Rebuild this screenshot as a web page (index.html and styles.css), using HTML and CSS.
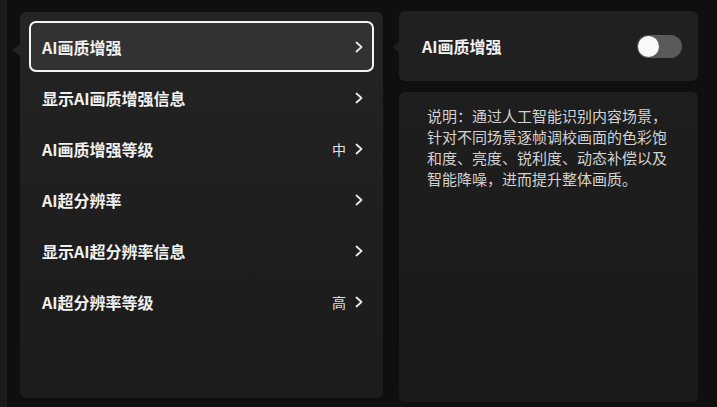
FILE: index.html
```html
<!DOCTYPE html>
<html lang="zh-CN">
<head>
<meta charset="utf-8">
<title>AI画质增强</title>
<link rel="stylesheet" href="styles.css">
</head>
<body>
<div class="screen">
  <div class="edge"></div>
  <div class="menu">
    <div class="row selected"><span class="label">AI画质增强</span><span class="end"><svg class="chev" viewBox="0 0 8 12"><polyline points="1.5,1.5 6.5,6 1.5,10.5"/></svg></span></div>
    <div class="row"><span class="label">显示AI画质增强信息</span><span class="end"><svg class="chev" viewBox="0 0 8 12"><polyline points="1.5,1.5 6.5,6 1.5,10.5"/></svg></span></div>
    <div class="row"><span class="label">AI画质增强等级</span><span class="end"><span class="value">中</span><svg class="chev" viewBox="0 0 8 12"><polyline points="1.5,1.5 6.5,6 1.5,10.5"/></svg></span></div>
    <div class="row"><span class="label">AI超分辨率</span><span class="end"><svg class="chev" viewBox="0 0 8 12"><polyline points="1.5,1.5 6.5,6 1.5,10.5"/></svg></span></div>
    <div class="row"><span class="label">显示AI超分辨率信息</span><span class="end"><svg class="chev" viewBox="0 0 8 12"><polyline points="1.5,1.5 6.5,6 1.5,10.5"/></svg></span></div>
    <div class="row"><span class="label">AI超分辨率等级</span><span class="end"><span class="value">高</span><svg class="chev" viewBox="0 0 8 12"><polyline points="1.5,1.5 6.5,6 1.5,10.5"/></svg></span></div>
  </div>
  <div class="side">
    <div class="switch-card">
      <span class="title">AI画质增强</span>
      <span class="toggle"><span class="knob"></span></span>
    </div>
    <div class="desc-card">
      <p class="desc">说明：通过人工智能识别内容场景，针对不同场景逐帧调校画面的色彩饱和度、亮度、锐利度、动态补偿以及智能降噪，进而提升整体画质。</p>
    </div>
  </div>
</div>
</body>
</html>
```
FILE: styles.css
```css
html, body {
  margin: 0;
  padding: 0;
}
body {
  width: 717px;
  height: 407px;
  overflow: hidden;
  background: #0f0f0f;
  font-family: "Noto Sans CJK SC", "Noto Sans", sans-serif;
  color: #f2f2f2;
}
.screen {
  display: flex;
  align-items: flex-start;
  height: 407px;
}
.edge {
  width: 7px;
  height: 407px;
  background: #1b1b1b;
  margin-right: 13px;
  flex: none;
}
.menu {
  position: relative;
  flex: none;
  width: 345px;
  height: 368px;
  margin-top: 12px;
  padding: 9px;
  border-radius: 6px;
  background: linear-gradient(180deg, #242424 0%, #1e1e1e 60%, #1c1c1c 100%);
  display: flex;
  flex-direction: column;
}
.menu::before {
  content: "";
  position: absolute;
  left: -8px;
  top: 32px;
  border-style: solid;
  border-width: 6px 8px 6px 0;
  border-color: transparent #242424 transparent transparent;
}
.row {
  height: 47px;
  flex: none;
  display: flex;
  align-items: center;
  justify-content: space-between;
  padding: 0 9px 0 11px;
  border: 2px solid transparent;
  border-radius: 7px;
  font-size: 16px;
  font-weight: 700;
  color: #f0f0f0;
}
.row.selected {
  border-color: #f4f4f4;
  background: #323232;
}
.end {
  display: flex;
  align-items: center;
  gap: 9px;
}
.value {
  font-size: 14px;
  font-weight: 400;
  color: #e0e0e0;
}
.chev {
  width: 8px;
  height: 12px;
  fill: none;
  stroke: #e8e8e8;
  stroke-width: 1.8;
  stroke-linecap: round;
  stroke-linejoin: round;
}
.side {
  flex: none;
  width: 299px;
  margin-left: 16px;
  margin-top: 11px;
  display: flex;
  flex-direction: column;
  gap: 11px;
}
.switch-card {
  position: relative;
  height: 70px;
  box-sizing: border-box;
  padding: 0 16px 0 23px;
  border-radius: 6px;
  background: #202020;
  display: flex;
  align-items: center;
  justify-content: space-between;
}
.switch-card::before {
  content: "";
  position: absolute;
  left: -6px;
  top: 30px;
  border-style: solid;
  border-width: 6px 6px 6px 0;
  border-color: transparent #1e1e1e transparent transparent;
}
.title {
  font-size: 16px;
  font-weight: 700;
  color: #f2f2f2;
}
.toggle {
  width: 45px;
  height: 23px;
  border-radius: 12px;
  background: #5a5a5a;
  display: flex;
  align-items: center;
  padding: 0 1px;
  box-sizing: border-box;
}
.knob {
  width: 21px;
  height: 21px;
  border-radius: 50%;
  background: #fafafa;
}
.desc-card {
  height: 310px;
  box-sizing: border-box;
  padding: 13px 26px 0 28px;
  border-radius: 6px;
  background: linear-gradient(180deg, #1e1e1e 0%, #1a1a1a 100%);
}
.desc {
  margin: 0;
  font-size: 15px;
  line-height: 21px;
  color: #d2d2d2;
}
```
